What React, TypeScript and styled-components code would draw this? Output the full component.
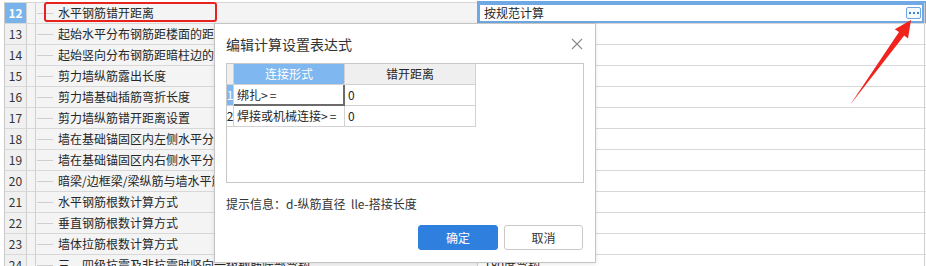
import React from "react";
import styled, { createGlobalStyle } from "styled-components";

const GlobalStyle = createGlobalStyle`
  html, body { margin: 0; padding: 0; background: #fff; }
  body {
    font-family: "Noto Sans CJK SC", "Microsoft YaHei", sans-serif;
    font-size: 12px;
    color: #333;
    overflow: hidden;
  }
`;

const Page = styled.div`
  position: relative;
  width: 926px;
  height: 266px;
  overflow: hidden;
  padding: 2px 0 0 4px;
  box-sizing: border-box;
`;

const Grid = styled.div`
  width: 921px;
  border-top: 1px solid #d6d6d6;
  border-left: 1px solid #c9c9c9;
  display: flex;
  flex-direction: column;
`;

const Row = styled.div`
  display: flex;
  height: 21px;
  flex: 0 0 21px;
  border-bottom: 1px solid #d8d8d8;
  box-sizing: border-box;
`;

const NumCell = styled.div<{ $selected?: boolean }>`
  width: 22px;
  flex: 0 0 22px;
  box-sizing: border-box;
  border-right: 1px solid #d0d0d0;
  background: ${(p) => (p.$selected ? "#78b3ec" : "#f0f0f0")};
  color: ${(p) => (p.$selected ? "#fff" : "#333")};
  font-weight: ${(p) => (p.$selected ? 700 : 400)};
  font-size: 12px;
  line-height: 20px;
  text-align: center;
`;

const TreeCell = styled.div`
  width: 9px;
  flex: 0 0 9px;
  box-sizing: border-box;
  border-right: 1px solid #d0d0d0;
  background: #f4f4f4;
`;

const DescCell = styled.div`
  width: 442px;
  flex: 0 0 442px;
  box-sizing: border-box;
  border-right: 1px solid #d0d0d0;
  background: #f4f4f4;
  display: flex;
  align-items: center;
  white-space: nowrap;
  overflow: hidden;
`;

const TreeLine = styled.span`
  width: 16px;
  flex: 0 0 16px;
  margin-left: 1px;
  border-top: 1px solid #cfcfcf;
`;

const DescText = styled.span`
  margin-left: 5px;
  font-size: 12px;
  line-height: 20px;
  color: #262626;
`;

const ValueCell = styled.div<{ $selected?: boolean }>`
  width: 447px;
  flex: 0 0 447px;
  box-sizing: border-box;
  border-right: 1px solid #cfcfcf;
  background: #fff;
  display: flex;
  align-items: center;
  justify-content: space-between;
  padding: 0 3px 0 6px;
  box-shadow: ${(p) => (p.$selected ? "0 0 0 2px #6fa8e2 inset, 0 -1px 0 1px #6fa8e2" : "none")};
  font-size: 12px;
  line-height: 20px;
  color: #262626;
  white-space: nowrap;
`;

const MoreButton = styled.span`
  width: 15px;
  height: 12px;
  box-sizing: border-box;
  border: 1px solid #6ea6df;
  border-radius: 2px;
  background: #f4f9ff;
  display: flex;
  align-items: center;
  justify-content: center;
  gap: 2px;
`;

const Dot = styled.span`
  width: 2px;
  height: 2px;
  background: #3b82d6;
`;

const Highlight = styled.div`
  position: absolute;
  left: 44px;
  top: 2px;
  width: 173px;
  height: 20px;
  box-sizing: border-box;
  border: 2px solid #e8231d;
  border-radius: 3px;
`;

const Arrow = styled.svg`
  position: absolute;
  left: 0;
  top: 0;
  pointer-events: none;
`;

const Dialog = styled.div`
  position: absolute;
  left: 214px;
  top: 23px;
  width: 382px;
  height: 240px;
  box-sizing: border-box;
  background: #fff;
  border: 1px solid #c4c4c4;
  box-shadow: 0 1px 4px rgba(0, 0, 0, 0.1);
  display: flex;
  flex-direction: column;
  padding: 0 11px 12px 11px;
`;

const DialogHeader = styled.div`
  height: 39px;
  flex: 0 0 39px;
  display: flex;
  align-items: center;
  justify-content: space-between;
`;

const DialogTitle = styled.span`
  font-size: 14px;
  color: #333;
  margin-top: 1px;
`;

const CloseIcon = styled.svg`
  margin-right: 1px;
  margin-top: 1px;
`;

const TableBox = styled.div`
  height: 120px;
  flex: 0 0 120px;
  box-sizing: border-box;
  border: 1px solid #c8c8c8;
`;

const SetTable = styled.div`
  display: grid;
  grid-template-columns: 7px 111px 131px;
  grid-auto-rows: 21px;
`;

const TCell = styled.div<{
  $bg?: string;
  $color?: string;
  $align?: string;
  $active?: boolean;
}>`
  box-sizing: border-box;
  border-right: ${(p) => (p.$active ? "2px solid #6b6b6b" : "1px solid #d2d2d2")};
  border-bottom: ${(p) => (p.$active ? "2px solid #6b6b6b" : "1px solid #d2d2d2")};
  background: ${(p) => p.$bg || "#fff"};
  color: ${(p) => p.$color || "#262626"};
  text-align: ${(p) => p.$align || "left"};
  font-size: 12px;
  line-height: 20px;
  padding: ${(p) => (p.$align === "left" ? "0 0 0 3px" : "0")};
  white-space: nowrap;
  overflow: visible;
`;

const NumText = styled.span`
  display: block;
  margin-left: -1px;
  width: 8px;
  text-align: center;
`;

const Op = styled.span`
  letter-spacing: 2px;
`;

const Hint = styled.div`
  margin-top: 12px;
  font-size: 12px;
  line-height: 18px;
  color: #333;
  white-space: pre;
`;

const Buttons = styled.div`
  margin-top: 12px;
  display: flex;
  justify-content: flex-end;
  gap: 6px;
  padding-right: 1px;
`;

const Btn = styled.button<{ $primary?: boolean }>`
  width: ${(p) => (p.$primary ? "80px" : "79px")};
  height: 25px;
  box-sizing: border-box;
  border-radius: 3px;
  border: 1px solid ${(p) => (p.$primary ? "#2f80de" : "#c9c9c9")};
  background: ${(p) => (p.$primary ? "#2f80de" : "#fff")};
  color: ${(p) => (p.$primary ? "#fff" : "#333")};
  font-family: inherit;
  font-size: 12px;
  padding: 0;
`;

const rows: { n: number; text: string; value?: string }[] = [
  { n: 12, text: "水平钢筋错开距离", value: "按规范计算" },
  { n: 13, text: "起始水平分布钢筋距楼面的距离" },
  { n: 14, text: "起始竖向分布钢筋距暗柱边的距离" },
  { n: 15, text: "剪力墙纵筋露出长度" },
  { n: 16, text: "剪力墙基础插筋弯折长度" },
  { n: 17, text: "剪力墙纵筋错开距离设置" },
  { n: 18, text: "墙在基础锚固区内左侧水平分布筋设置" },
  { n: 19, text: "墙在基础锚固区内右侧水平分布筋设置" },
  { n: 20, text: "暗梁/边框梁/梁纵筋与墙水平筋的关系" },
  { n: 21, text: "水平钢筋根数计算方式" },
  { n: 22, text: "垂直钢筋根数计算方式" },
  { n: 23, text: "墙体拉筋根数计算方式" },
  { n: 24, text: "三、四级抗震及非抗震时竖向一级钢筋端部弯钩", value: "180度弯钩" },
];

export default function App() {
  return (
    <>
      <GlobalStyle />
      <Page>
        <Grid>
          {rows.map((r) => (
            <Row key={r.n}>
              <NumCell $selected={r.n === 12}>{r.n}</NumCell>
              <TreeCell />
              <DescCell>
                <TreeLine />
                <DescText>{r.text}</DescText>
              </DescCell>
              <ValueCell $selected={r.n === 12}>
                <span>{r.value || ""}</span>
                {r.n === 12 && (
                  <MoreButton>
                    <Dot />
                    <Dot />
                    <Dot />
                  </MoreButton>
                )}
              </ValueCell>
            </Row>
          ))}
        </Grid>

        <Highlight />

        <Dialog>
          <DialogHeader>
            <DialogTitle>编辑计算设置表达式</DialogTitle>
            <CloseIcon width="12" height="12" viewBox="0 0 12 12">
              <path d="M1 1 L11 11 M11 1 L1 11" stroke="#8a8a8a" strokeWidth="1.1" fill="none" />
            </CloseIcon>
          </DialogHeader>
          <TableBox>
            <SetTable>
              <TCell $bg="#efefef" />
              <TCell $bg="#7fb8f0" $color="#fff" $align="center">连接形式</TCell>
              <TCell $bg="#efefef" $align="center">错开距离</TCell>

              <TCell $bg="#7fb8f0" $color="#fff" $align="center">
                <NumText>1</NumText>
              </TCell>
              <TCell $align="left" $active>
                绑扎<Op>&gt;=</Op>
              </TCell>
              <TCell $align="left">0</TCell>

              <TCell $align="center">
                <NumText>2</NumText>
              </TCell>
              <TCell $align="left">
                焊接或机械连接<Op>&gt;=</Op>
              </TCell>
              <TCell $align="left">0</TCell>
            </SetTable>
          </TableBox>
          <Hint>提示信息：d-纵筋直径  lle-搭接长度</Hint>
          <Buttons>
            <Btn $primary>确定</Btn>
            <Btn>取消</Btn>
          </Buttons>
        </Dialog>

        <Arrow width="926" height="266" viewBox="0 0 926 266">
          <polygon
            points="911,20 908,38.5 904.2,35.6 850,105 899,31.9 894.8,29.2"
            fill="#f0231d"
          />
        </Arrow>
      </Page>
    </>
  );
}
